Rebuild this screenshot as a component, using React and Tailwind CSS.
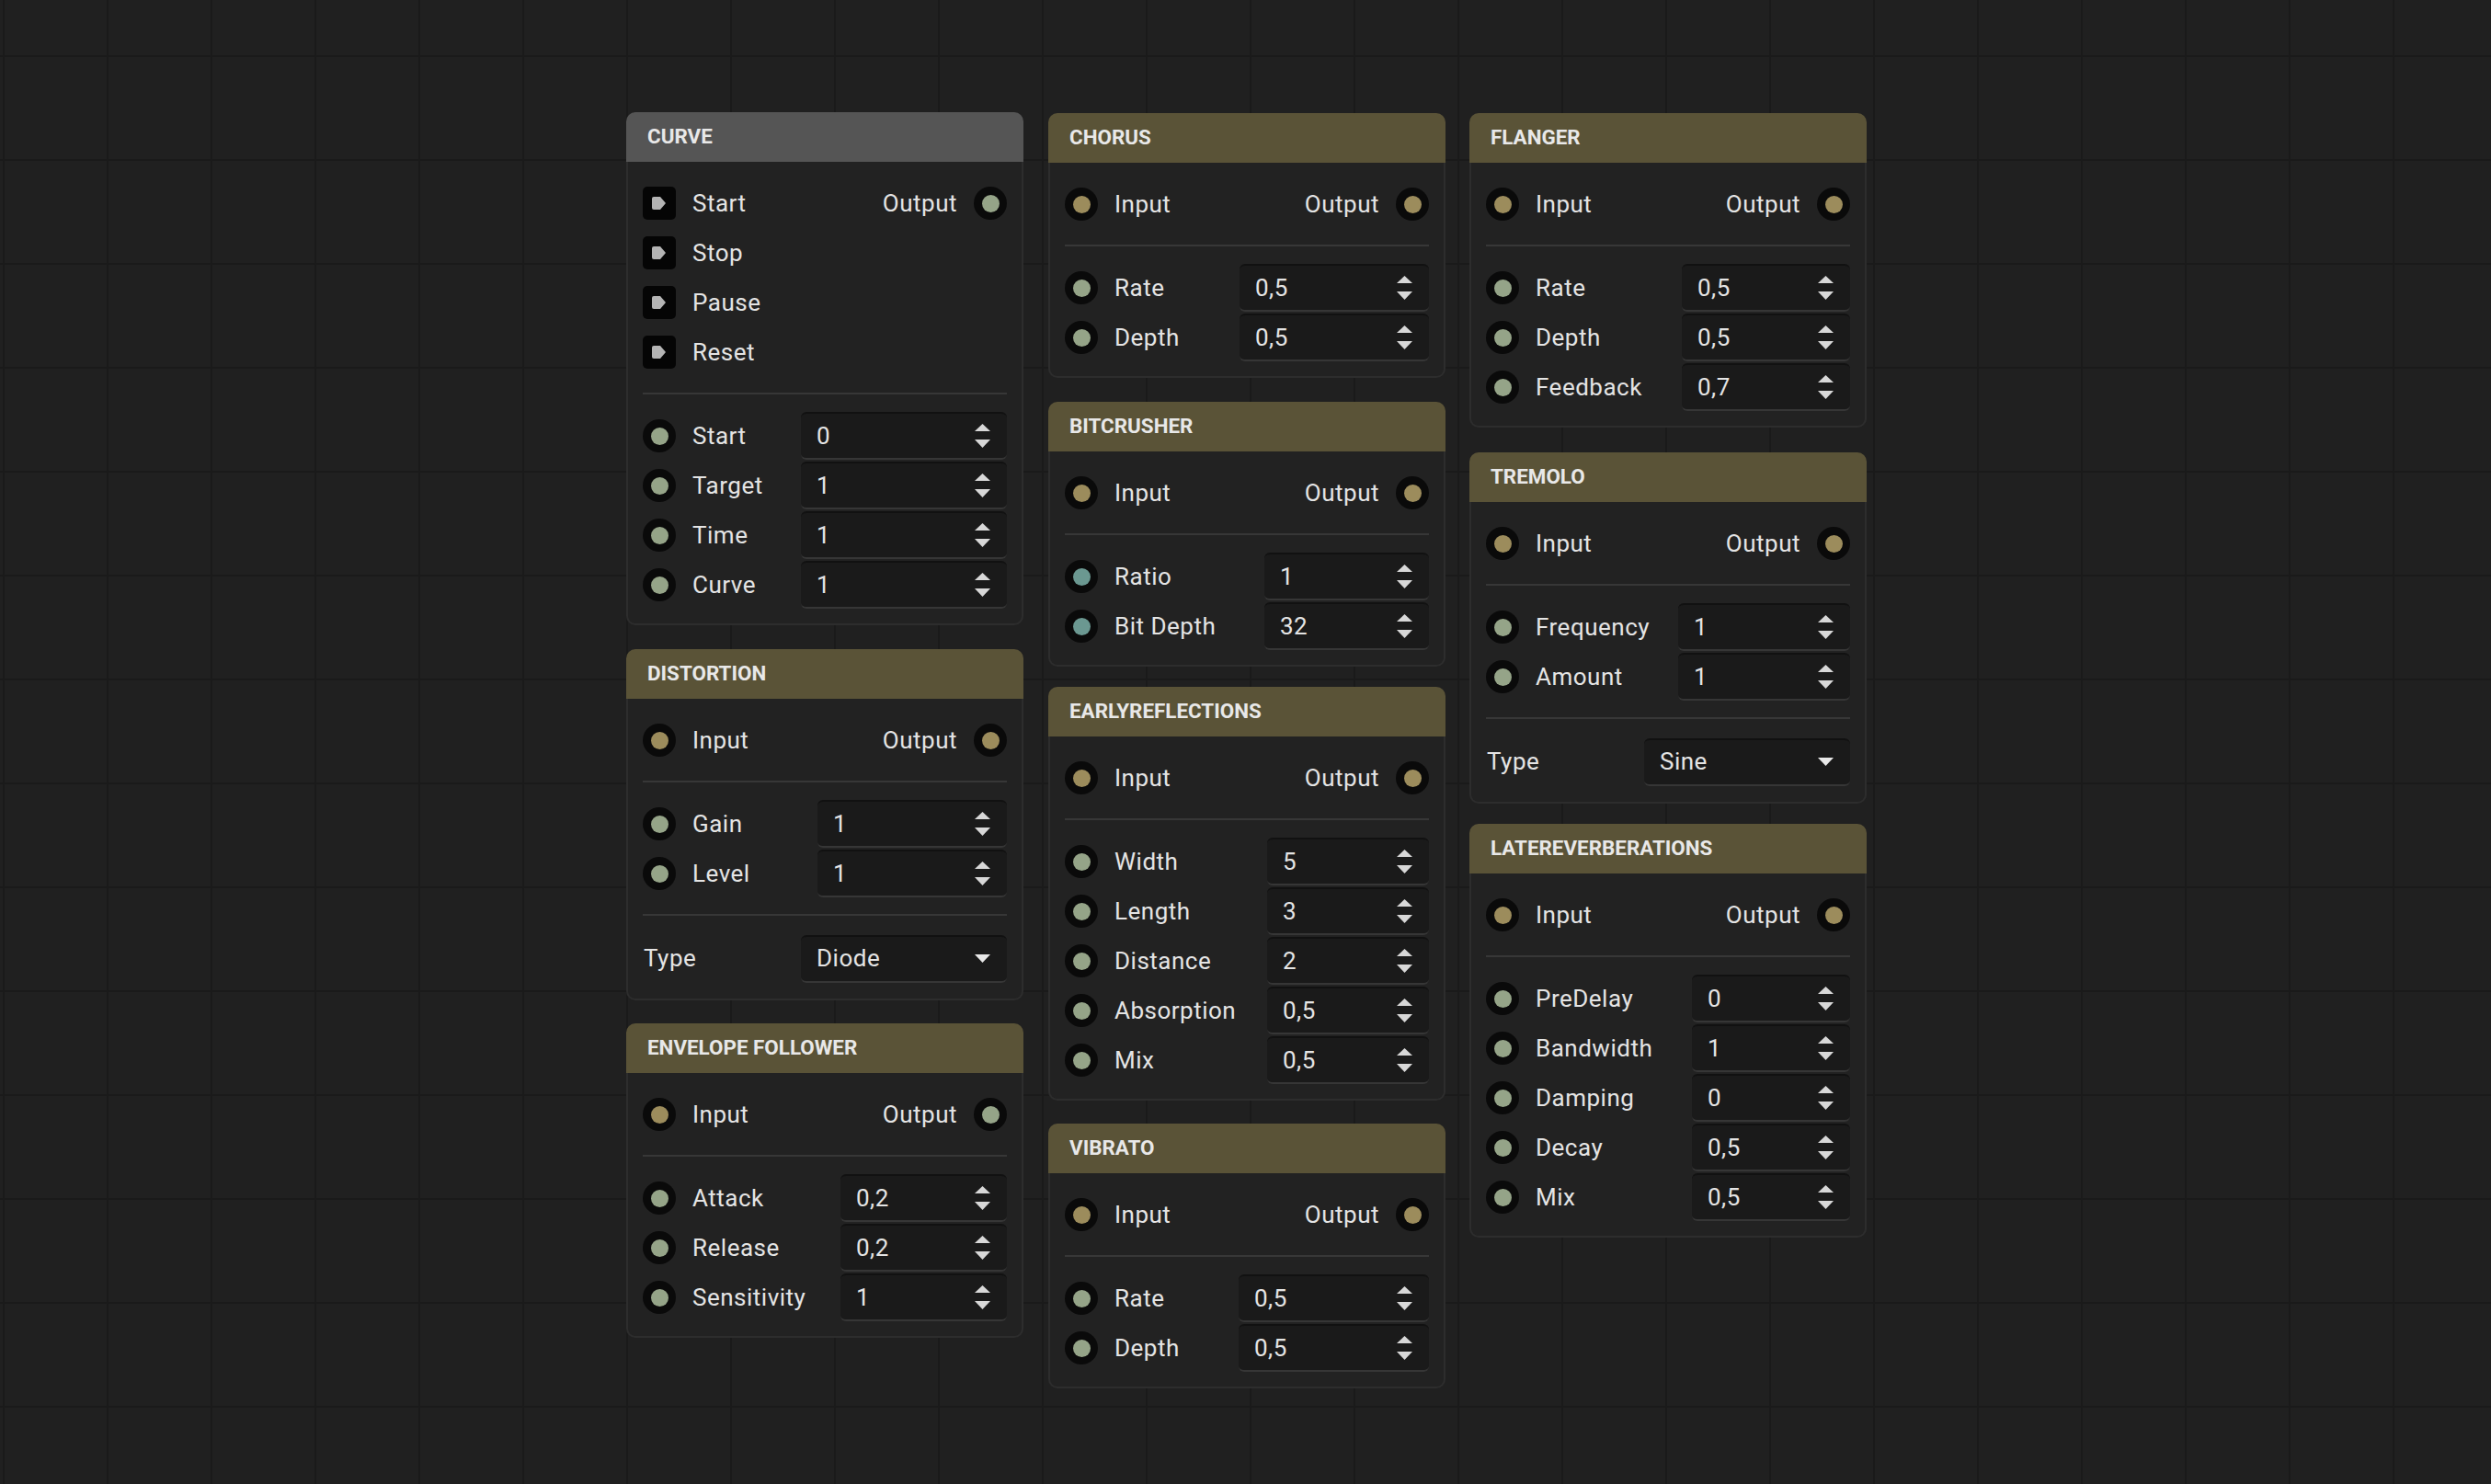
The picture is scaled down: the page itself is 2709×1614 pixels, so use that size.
import React from "react";

const TAN = "bg-[#9c8c5c]";
const SAGE = "bg-[#95a488]";
const TEAL = "bg-[#6b9891]";
const TXT = "text-[26px] tracking-[0.5px] text-[#e4e4e4]";

function Socket({ color }) {
  return (
    <div className="w-[36px] h-[36px] rounded-full bg-[#0a0a0a] flex items-center justify-center shrink-0">
      <div className={"w-[19px] h-[19px] rounded-full " + color} />
    </div>
  );
}

function Trigger() {
  return (
    <div className="w-[36px] h-[36px] rounded-[5px] bg-[#050505] flex items-center pl-[10px] shrink-0">
      <svg width="15" height="14" viewBox="0 0 15 14">
        <path d="M2 0 H9 L15 7 L9 14 H2 Q0 14 0 12 V2 Q0 0 2 0 Z" fill="#b4b4b4" />
      </svg>
    </div>
  );
}

function Spinner() {
  return (
    <svg width="17" height="26" viewBox="0 0 17 26" className="shrink-0">
      <path d="M0 8 L8.5 0 L17 8 Z" fill="#d8d8d8" />
      <path d="M0 17 L17 17 L8.5 26 Z" fill="#d8d8d8" />
    </svg>
  );
}

function Caret() {
  return (
    <svg width="17" height="9" viewBox="0 0 17 9" className="shrink-0">
      <path d="M0 0 L17 0 L8.5 9 Z" fill="#e8e8e8" />
    </svg>
  );
}

function Box({ value, width, select }) {
  return (
    <div
      className="flex items-center h-[52px] rounded-[6px] bg-[#1a1a1a] border-t-2 border-b-2 border-t-[#111111] border-b-[#363636] pl-[17px] pr-[18px] shrink-0"
      style={{ width: width + "px" }}
    >
      <span className={"flex-1 " + TXT}>{value}</span>
      {select ? <Caret /> : <Spinner />}
    </div>
  );
}

function Divider() {
  return <div className="h-[2px] bg-[#373737] mt-[17px] mb-[18px]" />;
}

function IORow({ inColor, outColor }) {
  return (
    <div className="flex items-center h-[54px]">
      <Socket color={inColor} />
      <span className={"ml-[18px] flex-1 " + TXT}>Input</span>
      <span className={"mr-[18px] " + TXT}>Output</span>
      <Socket color={outColor} />
    </div>
  );
}

function ParamRow({ label, value, width, color }) {
  return (
    <div className="flex items-center h-[54px]">
      <Socket color={color || SAGE} />
      <span className={"ml-[18px] flex-1 whitespace-nowrap " + TXT}>{label}</span>
      <Box value={value} width={width} />
    </div>
  );
}

function SelectRow({ value }) {
  return (
    <div className="flex items-center h-[57px]">
      <span className={"ml-[1px] flex-1 " + TXT}>Type</span>
      <Box value={value} width={224} select />
    </div>
  );
}

function Node({ title, grey, mt, children }) {
  return (
    <div className="w-[432px] shrink-0" style={{ marginTop: mt + "px" }}>
      <div
        className={
          "h-[54px] flex items-center pl-[23px] rounded-t-[10px] text-[22.4px] font-bold text-[#e8e8e8] " +
          (grey ? "bg-[#555555]" : "bg-[#5a5337]")
        }
      >
        {title}
      </div>
      <div className="bg-[#222222] border-x-2 border-b-2 border-[#2d2d2d] rounded-b-[10px] px-[16px] pt-[18px] pb-[15px]">
        {children}
      </div>
    </div>
  );
}

function FxNode({ title, mt, params, width, select, outColor }) {
  return (
    <Node title={title} mt={mt}>
      <IORow inColor={TAN} outColor={outColor || TAN} />
      <Divider />
      {params.map((p) => (
        <ParamRow key={p[0]} label={p[0]} value={p[1]} color={p[2]} width={width} />
      ))}
      {select && (
        <>
          <Divider />
          <SelectRow value={select} />
        </>
      )}
    </Node>
  );
}

function CurveNode() {
  const triggers = ["Stop", "Pause", "Reset"];
  return (
    <Node title="CURVE" grey mt={122}>
      <div className="flex items-center h-[54px]">
        <Trigger />
        <span className={"ml-[18px] flex-1 " + TXT}>Start</span>
        <span className={"mr-[18px] " + TXT}>Output</span>
        <Socket color={SAGE} />
      </div>
      {triggers.map((t) => (
        <div key={t} className="flex items-center h-[54px]">
          <Trigger />
          <span className={"ml-[18px] flex-1 " + TXT}>{t}</span>
        </div>
      ))}
      <Divider />
      {[
        ["Start", "0"],
        ["Target", "1"],
        ["Time", "1"],
        ["Curve", "1"],
      ].map((p) => (
        <ParamRow key={p[0]} label={p[0]} value={p[1]} width={224} />
      ))}
    </Node>
  );
}

export default function App() {
  return (
    <div
      className="w-[2709px] h-[1614px] overflow-hidden bg-[#202020] [background-image:linear-gradient(to_right,#1a1a1a_2px,transparent_2px),linear-gradient(to_bottom,#1a1a1a_2px,transparent_2px)] [background-size:113px_113px] [background-position:3px_60px]"
      style={{ fontFamily: "Roboto, 'Noto Sans', sans-serif" }}
    >
      <div className="flex items-start pl-[681px]">
        <div className="flex flex-col w-[432px]">
          <CurveNode />
          <FxNode
            title="DISTORTION"
            mt={26}
            width={206}
            params={[
              ["Gain", "1"],
              ["Level", "1"],
            ]}
            select="Diode"
          />
          <FxNode
            title="ENVELOPE FOLLOWER"
            mt={25}
            width={181}
            outColor={SAGE}
            params={[
              ["Attack", "0,2"],
              ["Release", "0,2"],
              ["Sensitivity", "1"],
            ]}
          />
        </div>
        <div className="flex flex-col w-[432px] ml-[27px]">
          <FxNode
            title="CHORUS"
            mt={123}
            width={206}
            params={[
              ["Rate", "0,5"],
              ["Depth", "0,5"],
            ]}
          />
          <FxNode
            title="BITCRUSHER"
            mt={26}
            width={179}
            params={[
              ["Ratio", "1", TEAL],
              ["Bit Depth", "32", TEAL],
            ]}
          />
          <FxNode
            title="EARLYREFLECTIONS"
            mt={22}
            width={176}
            params={[
              ["Width", "5"],
              ["Length", "3"],
              ["Distance", "2"],
              ["Absorption", "0,5"],
              ["Mix", "0,5"],
            ]}
          />
          <FxNode
            title="VIBRATO"
            mt={25}
            width={207}
            params={[
              ["Rate", "0,5"],
              ["Depth", "0,5"],
            ]}
          />
        </div>
        <div className="flex flex-col w-[432px] ml-[26px]">
          <FxNode
            title="FLANGER"
            mt={123}
            width={183}
            params={[
              ["Rate", "0,5"],
              ["Depth", "0,5"],
              ["Feedback", "0,7"],
            ]}
          />
          <FxNode
            title="TREMOLO"
            mt={27}
            width={187}
            params={[
              ["Frequency", "1"],
              ["Amount", "1"],
            ]}
            select="Sine"
          />
          <FxNode
            title="LATEREVERBERATIONS"
            mt={22}
            width={172}
            params={[
              ["PreDelay", "0"],
              ["Bandwidth", "1"],
              ["Damping", "0"],
              ["Decay", "0,5"],
              ["Mix", "0,5"],
            ]}
          />
        </div>
      </div>
    </div>
  );
}
